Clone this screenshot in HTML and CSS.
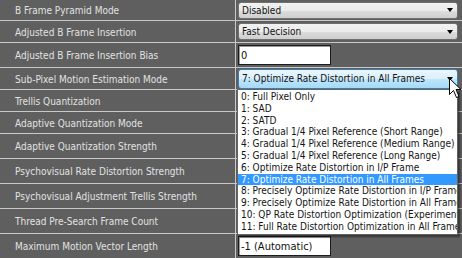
FILE: index.html
```html
<!DOCTYPE html>
<html lang="en">
<head>
	<meta charset="UTF-8">
	<title>x264 settings</title>
	<link rel="stylesheet" href="styles.css">
</head>
<body>
	<div class="props">
		<div class="row h21">
			<div class="name">B Frame Pyramid Mode</div>
			<div class="val"><div class="combo">Disabled<span class="arr"></span></div></div>
		</div>
		<div class="row h22">
			<div class="name">Adjusted B Frame Insertion</div>
			<div class="val"><div class="combo">Fast Decision<span class="arr"></span></div></div>
		</div>
		<div class="row h25">
			<div class="name">Adjusted B Frame Insertion Bias</div>
			<div class="val"><div class="box">0</div></div>
		</div>
		<div class="row h22">
			<div class="name">Sub-Pixel Motion Estimation Mode</div>
			<div class="val"><div class="combo hot">7: Optimize Rate Distortion in All Frames<span class="arr"></span></div></div>
		</div>
		<!-- the rows below are covered by the open list -->
		<div class="row h22">
			<div class="name">Trellis Quantization</div>
			<div class="val"><div class="combo"></div></div>
		</div>
		<div class="row h22">
			<div class="name">Adaptive Quantization Mode</div>
			<div class="val"><div class="combo"></div></div>
		</div>
		<div class="row h25">
			<div class="name">Adaptive Quantization Strength</div>
			<div class="val"><div class="box"></div></div>
		</div>
		<div class="row h25">
			<div class="name">Psychovisual Rate Distortion Strength</div>
			<div class="val"><div class="box"></div></div>
		</div>
		<div class="row h25">
			<div class="name">Psychovisual Adjustment Trellis Strength</div>
			<div class="val"><div class="box"></div></div>
		</div>
		<div class="row h25">
			<div class="name">Thread Pre-Search Frame Count</div>
			<div class="val"><div class="box"></div></div>
		</div>
		<div class="row h25">
			<div class="name">Maximum Motion Vector Length</div>
			<div class="val"><div class="box">-1 (Automatic)</div></div>
		</div>
	</div>

	<ul class="drop">
		<li>0: Full Pixel Only</li>
		<li>1: SAD</li>
		<li>2: SATD</li>
		<li>3: Gradual 1/4 Pixel Reference (Short Range)</li>
		<li>4: Gradual 1/4 Pixel Reference (Medium Range)</li>
		<li>5: Gradual 1/4 Pixel Reference (Long Range)</li>
		<li>6: Optimize Rate Distortion in I/P Frame</li>
		<li class="sel">7: Optimize Rate Distortion in All Frames</li>
		<li>8: Precisely Optimize Rate Distortion in I/P Frame</li>
		<li>9: Precisely Optimize Rate Distortion in All Frames</li>
		<li>10: QP Rate Distortion Optimization (Experimental)</li>
		<li>11: Full Rate Distortion Optimization in All Frames</li>
	</ul>

	<!-- mouse pointer -->
	<svg class="pointer" width="13" height="21" viewBox="0 0 13 21">
		<path d="M0.5 0.5 L0.5 16.5 L4.5 12.5 L7.5 19.5 L10 18.5 L7 11.5 L12 11.5 Z" fill="#fff" stroke="#000" stroke-width="1" stroke-linejoin="miter"/>
	</svg>
</body>
</html>
```

FILE: styles.css
```css
*{
	margin:0;
	padding:0;
	list-style:none;
	box-sizing:border-box;
}
body{
	background:#5f5f5f;
	font-family:"DejaVu Sans Condensed","DejaVu Sans",sans-serif;
	font-stretch:condensed;
	font-size:10px;
	overflow:hidden;
}
.props{
	width:462px;
}
.row{
	display:grid;
	grid-template-columns:236px 1fr;
	border-bottom:1px solid #c9c9c9;
}
.h21{height:21px;}
.h22{height:22px;}
.h25{height:25px;}
.name{
	color:#e2e2e2;
	padding-left:15px;
	padding-top:1px;
	border-right:1px solid #c9c9c9;
	display:flex;
	align-items:center;
	white-space:nowrap;
}
.val{
	padding-left:2px;
	display:flex;
	align-items:center;
}
.combo{
	width:220px;
	height:17px;
	border:1px solid #707070;
	border-radius:3px;
	background:linear-gradient(#f2f2f2 0%,#ebebeb 50%,#dddddd 51%,#cfcfcf 100%);
	color:#111;
	padding-left:3px;
	display:flex;
	align-items:center;
	position:relative;
	white-space:nowrap;
}
.combo.hot{
	height:20px;
	border-color:#3c7fb1;
	background:linear-gradient(#eaf6fd 0%,#d9f0fc 50%,#bee6fd 51%,#a7d9f5 100%);
}
.arr{
	position:absolute;
	right:4px;
	top:50%;
	margin-top:-2px;
	border-left:3.5px solid transparent;
	border-right:3.5px solid transparent;
	border-top:4px solid #000;
}
.box{
	width:93px;
	height:20px;
	background:#fff;
	border:1px solid #1c1c1c;
	box-shadow:inset 1px 1px 0 #9a9a9a;
	color:#111;
	padding-left:2px;
	display:flex;
	align-items:center;
	font-size:11px;
}
.drop{
	position:absolute;
	left:237px;
	top:89px;
	width:221px;
	height:146px;
	background:#fff;
	border:1px solid #646464;
	box-shadow:2px 2px 2px rgba(0,0,0,0.45);
	padding-top:1px;
	overflow:hidden;
}
.drop li{
	height:11.8px;
	line-height:11.8px;
	padding-left:3px;
	color:#141414;
	white-space:nowrap;
	overflow:hidden;
}
.drop li.sel{
	background:#3399ff;
	color:#fff;
}
.pointer{
	position:absolute;
	left:449px;
	top:78px;
}
```
